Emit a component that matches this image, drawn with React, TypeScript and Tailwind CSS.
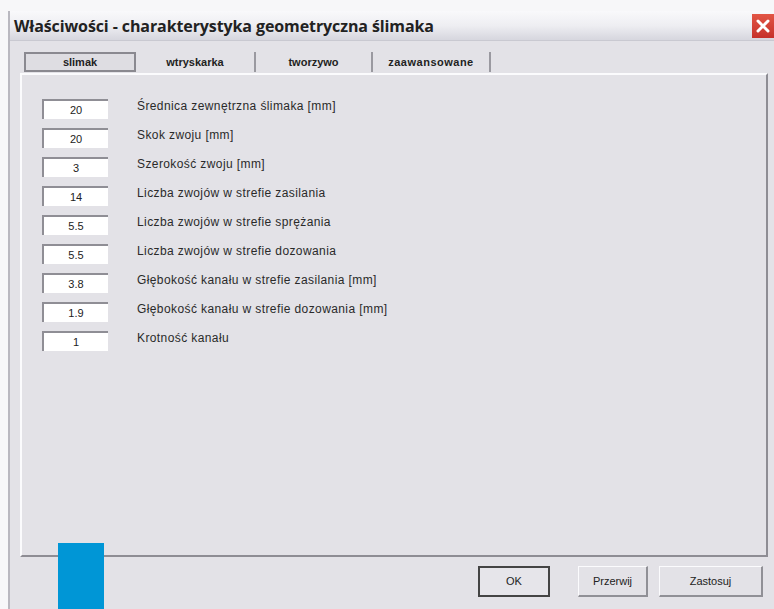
import React from "react";

const fields: [string, string][] = [
  ["20", "Średnica zewnętrzna ślimaka  [mm]"],
  ["20", "Skok zwoju  [mm]"],
  ["3", "Szerokość zwoju  [mm]"],
  ["14", "Liczba zwojów w strefie zasilania"],
  ["5.5", "Liczba zwojów w strefie sprężania"],
  ["5.5", "Liczba zwojów w strefie dozowania"],
  ["3.8", "Głębokość kanału w strefie zasilania  [mm]"],
  ["1.9", "Głębokość kanału w strefie dozowania  [mm]"],
  ["1", "Krotność kanału"],
];

const tabs = ["slimak", "wtryskarka", "tworzywo", "zaawansowane"];

export default function App() {
  return (
    <div
      className="relative w-[774px] h-[609px] overflow-hidden bg-[#f7f7f9] pt-[11px] pl-[8px]"
      style={{ fontFamily: '"Liberation Sans", Arial, sans-serif' }}
    >
      <div className="flex flex-col h-[598px] w-[766px] border-l-2 border-[#b9b8c0] bg-[#e3e2e7]">
        {/* title bar */}
        <div className="flex items-center justify-between h-[30px] bg-gradient-to-b from-[#f9f9fb] via-[#eeeef2] to-[#d6d6de] border-b border-[#c9c9d1]">
          <span
            className="pl-[4px] text-[16px] font-bold text-[#222] tracking-[-0.1px]"
            style={{ fontFamily: '"Open Sans", "DejaVu Sans", sans-serif' }}
          >
            Właściwości - charakterystyka geometryczna ślimaka
          </span>
          <div className="w-[22px] h-[24px] bg-gradient-to-b from-[#e25545] to-[#c6302a] flex items-center justify-center">
            <svg width="16" height="16" viewBox="0 0 16 16">
              <path d="M3 3 L13 13 M13 3 L3 13" stroke="#fff" strokeWidth="3" strokeLinecap="round" />
            </svg>
          </div>
        </div>

        {/* tabs */}
        <div className="flex items-end h-[31px] pl-[14px] pt-[10px]">
          {tabs.map((t, i) => (
            <div
              key={t}
              className={
                i === 0
                  ? "w-[112px] h-[20px] flex items-center justify-center border-2 border-[#8a8990] bg-[#dedde2] text-[11px] font-bold text-[#222]"
                  : i === 1
                  ? "w-[120px] h-[20px] flex items-center justify-center border-r-2 border-[#9a99a0] text-[11px] font-bold text-[#222]"
                  : i === 2
                  ? "w-[117px] h-[20px] flex items-center justify-center border-r-2 border-[#9a99a0] text-[11px] font-bold text-[#222]"
                  : "w-[118px] h-[20px] flex items-center justify-center border-r-2 border-[#9a99a0] text-[11px] font-bold text-[#222] tracking-[0.5px]"
              }
            >
              {t}
            </div>
          ))}
        </div>

        {/* tab panel */}
        <div className="ml-[10px] mr-[6px] mt-[1px] h-[484px] border-t-2 border-l-2 border-[#fbfbfd] border-r-2 border-b-2 border-r-[#8e8d94] border-b-[#8e8d94] pt-[24px] pl-[20px] flex flex-col gap-[9px]">
          {fields.map(([v, l], i) => (
            <div key={i} className="flex items-center h-[20px]">
              <div className="w-[66px] h-[20px] bg-white border-t-2 border-l-2 border-[#8f8e95] flex items-center justify-center text-[11px] text-[#222]">
                {v}
              </div>
              <span className="ml-[29px] text-[12px] tracking-[0.4px] text-[#2a2a2a] -mt-[7px]">{l}</span>
            </div>
          ))}
        </div>

        {/* buttons */}
        <div className="flex justify-end pr-[11px] pt-[9px]">
          <button className="w-[72px] h-[31px] mr-[28px] border-2 border-[#444] bg-[#e6e5ea] text-[11px] text-[#222]">OK</button>
          <button className="w-[70px] h-[31px] mr-[11px] border-t border-l border-[#fbfbfd] border-r-2 border-b-2 border-r-[#909096] border-b-[#909096] bg-[#e3e2e7] text-[11px] text-[#222]">
            Przerwij
          </button>
          <button className="w-[104px] h-[31px] border-t border-l border-[#fbfbfd] border-r-2 border-b-2 border-r-[#909096] border-b-[#909096] bg-[#e3e2e7] text-[11px] text-[#222]">
            Zastosuj
          </button>
        </div>
      </div>
      <div className="absolute left-[58px] top-[543px] w-[46px] h-[66px] bg-[#0096d6]" />
    </div>
  );
}
